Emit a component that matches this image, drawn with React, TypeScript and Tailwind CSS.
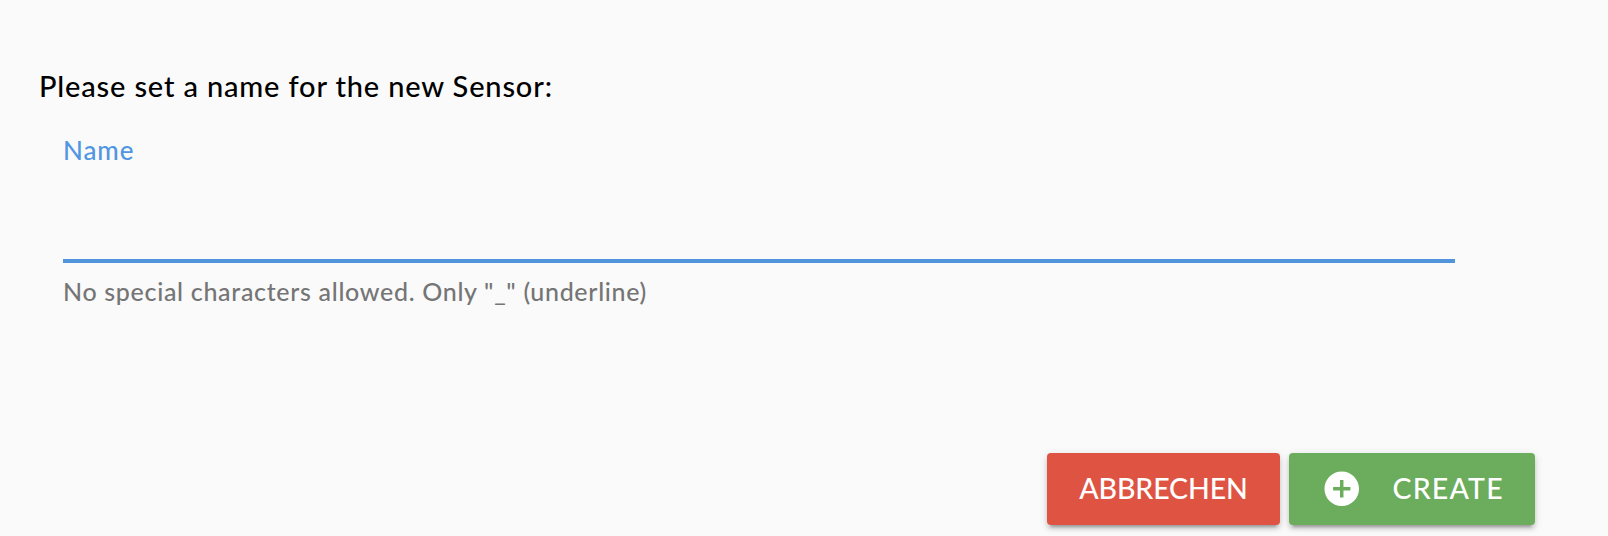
import { MdAddCircle } from "react-icons/md";

export default function App() {
  return (
    <main className="flex h-[536px] w-[1608px] flex-col overflow-hidden bg-[#fafafa] pt-[65px] font-['Lato','Open_Sans',sans-serif] font-medium">
      <h1 className="ml-[39px] h-[42px] self-start whitespace-nowrap text-[29px] leading-[42px] tracking-[0.84px] text-black">
        Please set a name for the new Sensor:
      </h1>
      <div className="ml-[63px] flex w-[1392px] flex-col pt-[23px]">
        <label htmlFor="name" className="h-[40px] self-start text-[26px] leading-[40px] tracking-[0.9px] text-[#5096e0]">Name</label>
        <input id="name" className="h-[93px] w-full border-b-4 border-[#5094db] bg-transparent text-[28px] outline-none" />
        <p className="mt-[8px] h-[40px] self-start whitespace-nowrap text-[25px] leading-[40px] tracking-[0.68px] text-[#757575]">
          No special characters allowed. Only "_" (underline)
        </p>
      </div>
      <div className="mt-[142px] mr-[73px] flex justify-end gap-[9px] text-[28.5px] text-white">
        <button className="flex h-[72px] w-[233px] items-center justify-center rounded bg-[#df5342] pb-[1px] tracking-[-0.1px] shadow-[0_6px_2px_-4px_rgba(0,0,0,0.2),0_4px_4px_0_rgba(0,0,0,0.14),0_2px_10px_0_rgba(0,0,0,0.12)]">ABBRECHEN</button>
        <button className="flex h-[72px] w-[246px] items-center rounded bg-[#6bac5d] pl-[32px] shadow-[0_6px_2px_-4px_rgba(0,0,0,0.2),0_4px_4px_0_rgba(0,0,0,0.14),0_2px_10px_0_rgba(0,0,0,0.12)]">
          <MdAddCircle className="mr-[30px] size-[41.5px]" />
          <span className="pb-[1px] tracking-[1.2px]">CREATE</span>
        </button>
      </div>
    </main>
  );
}
